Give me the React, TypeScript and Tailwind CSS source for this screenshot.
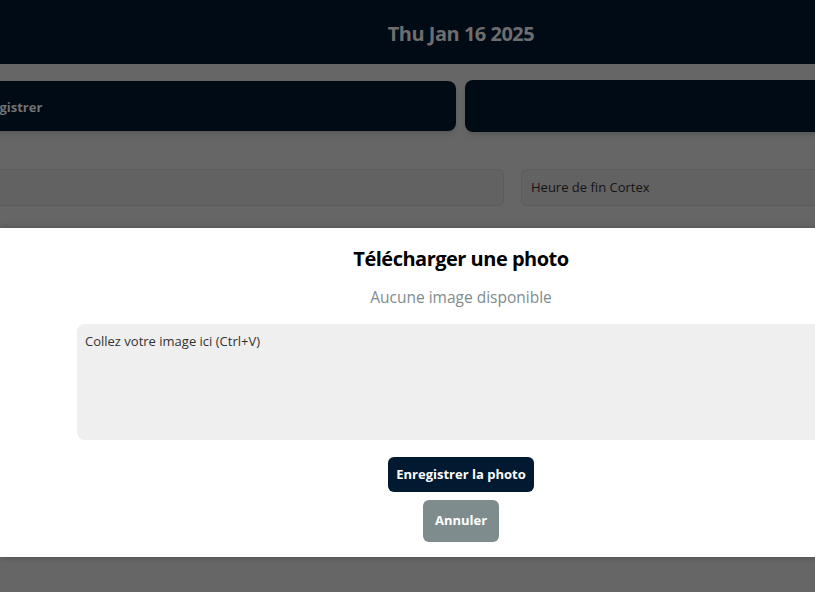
export default function App() {
    return (
        <div className="relative w-[815px] h-[592px] overflow-hidden bg-[#666666] font-['Open_Sans',sans-serif]">
            <div className="relative w-[922px] h-full">
                <header className="flex items-center justify-center h-16 pt-1 bg-[#010b16]">
                    <span className="text-xl font-bold text-[#6e6e6e] tracking-tight">Thu Jan 16 2025</span>
                </header>

                <div className="flex flex-row gap-[9px] mt-[17px] ml-[-46px]">
                    <div className="flex items-center w-[502px] h-[50px] px-4 pt-1 rounded-lg bg-[#010b16] shadow-md">
                        <span className="text-[13px] font-bold text-[#727272]">Enregistrer</span>
                    </div>
                    <div className="flex-1 h-[52px] -mt-px rounded-lg bg-[#010b16] shadow-md"></div>
                </div>

                <div className="flex flex-row gap-[17px] mt-[37px] ml-[-56px]">
                    <div className="w-[560px] h-[37px] rounded-md border border-[#5c5c5c] bg-[#626262]"></div>
                    <div className="flex items-center flex-1 h-[37px] px-[9px] rounded-md border border-[#5c5c5c] bg-[#626262]">
                        <span className="text-[13px] text-[#141414]">Heure de fin Cortex</span>
                    </div>
                </div>

                <div className="absolute left-0 right-0 top-[228px] h-[329px] flex flex-col items-center bg-white shadow-[0_0_6px_rgba(0,0,0,0.25)] pt-[16px]">
                    <h2 className="text-xl font-bold text-black leading-[30px] tracking-tight">Télécharger une photo</h2>
                    <p className="mt-[11px] text-[15.5px] text-[#7f8c8d] leading-6">Aucune image disponible</p>
                    <div className="self-stretch mx-[77px] mt-[15px] h-[116px] rounded-lg bg-[#efefef] px-2 py-[8px] leading-4">
                        <span className="text-[13px] leading-4 text-[#333333]">Collez votre image ici (Ctrl+V)</span>
                    </div>
                    <button className="mt-[17px] h-[35px] px-2 rounded-md bg-[#011a32] text-white text-[13px] font-bold">
                        Enregistrer la photo
                    </button>
                    <button className="mt-2 h-[42px] px-3 rounded-md bg-[#7f8c8d] text-white text-[13px] font-bold">
                        Annuler
                    </button>
                </div>
            </div>
        </div>
    )
}
